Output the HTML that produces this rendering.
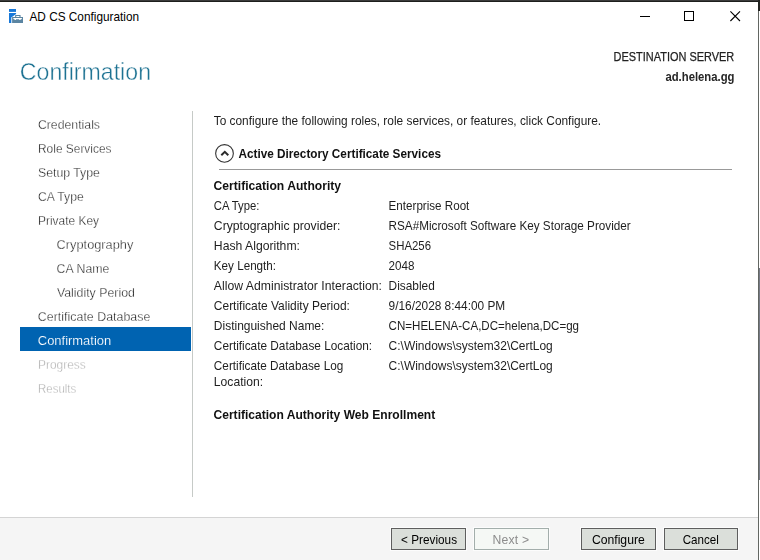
<!DOCTYPE html>
<html lang="en">
<head>
<meta charset="utf-8">
<title>AD CS Configuration</title>
<style>
html,body{margin:0;padding:0;}
body{width:760px;height:560px;overflow:hidden;background:#fff;font-family:"Liberation Sans", sans-serif;position:relative;}
.win{position:absolute;left:0;top:0;width:760px;height:560px;background:#fff;overflow:hidden;}
ul,dl,nav,main,section,header,footer{margin:0;padding:0;list-style:none;}
.t{position:absolute;display:block;margin:0;padding:0;white-space:nowrap;font-weight:400;line-height:20px;font-family:"Liberation Sans", sans-serif;transform-origin:0 50%;}
.gs{position:absolute;left:0;top:0;width:760px;height:560px;will-change:transform;}
.bar-top{position:absolute;left:0;top:0;width:760px;height:2px;background:#1d1f1c;}
.bar-top:before{content:"";position:absolute;left:0;top:0;width:760px;height:1px;background:#3b3b3b;}
.edge-r1{position:absolute;left:758px;top:0;width:2px;height:11px;background:#222421;}
.edge-r2{position:absolute;left:758px;top:11px;width:1px;height:549px;background:#626662;}
.edge-r3{position:absolute;left:759px;top:268px;width:1px;height:212px;background:#777b86;}
.ico{position:absolute;left:9px;top:9px;width:15px;height:15px;}
.ctl{position:absolute;top:2px;height:28px;}
.vline{position:absolute;left:192px;top:111px;width:1px;height:386px;background:#c6cac7;}
.selbg{position:absolute;left:20px;top:327px;width:171px;height:24px;background:#0063b1;}
.hr{position:absolute;left:219px;top:169px;width:513px;height:1px;background:#999;}
.exp{position:absolute;left:214px;top:143px;width:21px;height:21px;}
.footer{position:absolute;left:0;top:517px;width:758px;height:43px;background:#f5f5f5;border-top:1px solid #d4d4d4;box-sizing:border-box;}
.btn{position:absolute;top:528px;height:22px;margin:0;padding:0;box-sizing:border-box;border:1px solid #5e5e5e;border-radius:0;background:#dbdfda;box-shadow:0 0 0 1px #fcfcfc;font:inherit;text-align:left;overflow:visible;-webkit-appearance:none;appearance:none;}
.btn.off{border-color:#a3aeab;background:#f5f8f5;}
</style>
</head>
<body>
<div class="win">
  <div class="bar-top"></div>
  <div class="edge-r1"></div><div class="edge-r2"></div><div class="edge-r3"></div>
  <header class="titlebar">
    <svg class="ico" viewBox="0 0 15 15">
      <rect x="0" y="0" width="7" height="2.9" fill="#1878d8"/>
      <path d="M0 4.1h7.1v1L2.3 8.4V14H0z" fill="#1878d8"/>
      <path d="M6.7 8.2V6.5h4.3v1.7" fill="none" stroke="#5b85a2" stroke-width="1.1"/>
      <rect x="3.1" y="8" width="10.9" height="6" fill="#5b85a2"/>
      <path d="M4.1 9h9l-0.6 1.2h-0.7l-0.4 0.9h-1l-0.3-0.9H7.1l-0.3 0.9h-1l-0.4-0.9H4.7z" fill="#fff"/>
    </svg>
    <span class="t wt" style="left:29px;top:7px;font-size:12.2px;color:#000;transform:translateX(0.48px) scaleX(0.9687);">AD CS Configuration</span>
    <svg class="ctl" style="left:622px;width:138px" viewBox="0 0 138 28">
      <path d="M18 14.5h10" stroke="#000" stroke-width="1" fill="none" shape-rendering="crispEdges"/>
      <rect x="62.5" y="9.5" width="9" height="9" stroke="#000" stroke-width="1" fill="none" shape-rendering="crispEdges"/>
      <path d="M108.4 9.4l9.6 9.6M118 9.4l-9.6 9.6" stroke="#000" stroke-width="1.1" fill="none"/>
    </svg>
  </header>
  <div class="gs">
    <header class="pagehead">
      <h1 class="t h1" style="left:19px;top:54px;font-size:24.6px;color:#1d7292;line-height:36px;transform:translateX(0.82px) scaleX(0.9409);-webkit-text-stroke:0.42px #fff;">Confirmation</h1>
      <span class="t ds" style="left:613px;top:47px;font-size:12.7px;color:#222;transform:translateX(0.60px) scaleX(0.8629);-webkit-text-stroke:0.25px #222;">DESTINATION SERVER</span>
      <span class="t dn" style="left:665px;top:67px;font-size:12.2px;color:#262626;transform:translateX(0.42px) scaleX(0.9274);font-weight:700;">ad.helena.gg</span>
    </header>
    <nav>
      <div class="selbg"></div>
      <ul>
      <li class="t nv" style="left:37px;top:115px;font-size:13.2px;color:#000;transform:translateX(0.88px) scaleX(0.9313);-webkit-text-stroke:0.38px #fff;">Credentials</li>
      <li class="t nv" style="left:38px;top:139px;font-size:13.2px;color:#000;transform:translateX(0.02px) scaleX(0.9030);-webkit-text-stroke:0.38px #fff;">Role Services</li>
      <li class="t nv" style="left:37px;top:163px;font-size:13.2px;color:#000;transform:translateX(0.94px) scaleX(0.9316);-webkit-text-stroke:0.38px #fff;">Setup Type</li>
      <li class="t nv" style="left:37px;top:187px;font-size:13.2px;color:#000;transform:translateX(0.88px) scaleX(0.9236);-webkit-text-stroke:0.38px #fff;">CA Type</li>
      <li class="t nv" style="left:38px;top:211px;font-size:13.2px;color:#000;transform:translateX(0.02px) scaleX(0.9054);-webkit-text-stroke:0.38px #fff;">Private Key</li>
      <li class="t nv" style="left:56px;top:235px;font-size:13.2px;color:#000;transform:translateX(0.60px) scaleX(0.9692);-webkit-text-stroke:0.38px #fff;">Cryptography</li>
      <li class="t nv" style="left:56px;top:259px;font-size:13.2px;color:#000;transform:translateX(0.62px) scaleX(0.9355);-webkit-text-stroke:0.38px #fff;">CA Name</li>
      <li class="t nv" style="left:56px;top:283px;font-size:13.2px;color:#000;transform:translateX(0.95px) scaleX(0.9350);-webkit-text-stroke:0.38px #fff;">Validity Period</li>
      <li class="t nv" style="left:37px;top:307px;font-size:13.2px;color:#000;transform:translateX(0.87px) scaleX(0.9414);-webkit-text-stroke:0.38px #fff;">Certificate Database</li>
      <li class="t nv sel" style="left:37px;top:331px;font-size:13.2px;color:#fff;transform:translateX(0.84px) scaleX(0.9805);-webkit-text-stroke:0.15px #0063b1;">Confirmation</li>
      <li class="t nv dis" style="left:38px;top:355px;font-size:13.2px;color:#a6a6a6;transform:translateX(0.02px) scaleX(0.9041);-webkit-text-stroke:0.38px #fff;">Progress</li>
      <li class="t nv dis" style="left:38px;top:379px;font-size:13.2px;color:#a6a6a6;transform:translateX(0.06px) scaleX(0.8676);-webkit-text-stroke:0.38px #fff;">Results</li>
      </ul>
    </nav>
    <div class="vline"></div>
    <main>
      <p class="t p" style="left:213px;top:111px;font-size:12.2px;color:#1e1e1e;transform:translateX(0.73px) scaleX(0.9742);">To configure the following roles, role services, or features, click Configure.</p>
      <section>
      <svg class="exp" viewBox="0 0 21 21">
        <circle cx="10.5" cy="10.45" r="8.85" fill="#fff" stroke="#333" stroke-width="1.1"/>
        <path d="M7.3 12.3l3.5-3.5l3.5 3.5" fill="none" stroke="#2b2b2b" stroke-width="2"/>
      </svg>
      <h2 class="t sh" style="left:238px;top:144px;font-size:12.2px;color:#111;transform:translateX(0.46px) scaleX(0.9644);font-weight:700;">Active Directory Certificate Services</h2>
      <div class="hr"></div>
      <h3 class="t gh" style="left:213px;top:176px;font-size:12.2px;color:#111;transform:translateX(0.50px) scaleX(0.9955);font-weight:700;">Certification Authority</h3>
      <dl>
      <div class="row">
        <dt class="t k" style="left:213px;top:196px;font-size:12.2px;color:#1e1e1e;transform:translateX(0.85px) scaleX(0.9263);">CA Type:</dt>
        <dd class="t v" style="left:388px;top:196px;font-size:12.2px;color:#1e1e1e;transform:translateX(0.60px) scaleX(0.9535);">Enterprise Root</dd>
      </div>
      <div class="row">
        <dt class="t k" style="left:213px;top:216px;font-size:12.2px;color:#1e1e1e;transform:translateX(0.85px) scaleX(0.9987);">Cryptographic provider:</dt>
        <dd class="t v" style="left:388px;top:216px;font-size:12.2px;color:#1e1e1e;transform:translateX(0.60px) scaleX(0.9608);">RSA#Microsoft Software Key Storage Provider</dd>
      </div>
      <div class="row">
        <dt class="t k" style="left:213px;top:236px;font-size:12.2px;color:#1e1e1e;letter-spacing:0.005px;transform:translateX(0.85px);">Hash Algorithm:</dt>
        <dd class="t v" style="left:388px;top:236px;font-size:12.2px;color:#1e1e1e;transform:translateX(0.60px) scaleX(0.9341);">SHA256</dd>
      </div>
      <div class="row">
        <dt class="t k" style="left:213px;top:256px;font-size:12.2px;color:#1e1e1e;transform:translateX(0.85px) scaleX(0.9564);">Key Length:</dt>
        <dd class="t v" style="left:388px;top:256px;font-size:12.2px;color:#1e1e1e;transform:translateX(0.60px) scaleX(0.9555);">2048</dd>
      </div>
      <div class="row">
        <dt class="t k" style="left:213px;top:276px;font-size:12.2px;color:#1e1e1e;letter-spacing:0.025px;transform:translateX(0.85px);">Allow Administrator Interaction:</dt>
        <dd class="t v" style="left:388px;top:276px;font-size:12.2px;color:#1e1e1e;transform:translateX(0.60px) scaleX(0.9735);">Disabled</dd>
      </div>
      <div class="row">
        <dt class="t k" style="left:213px;top:296px;font-size:12.2px;color:#1e1e1e;transform:translateX(0.85px) scaleX(0.9810);">Certificate Validity Period:</dt>
        <dd class="t v" style="left:388px;top:296px;font-size:12.2px;color:#1e1e1e;transform:translateX(0.60px) scaleX(0.9724);">9/16/2028 8:44:00 PM</dd>
      </div>
      <div class="row">
        <dt class="t k" style="left:213px;top:316px;font-size:12.2px;color:#1e1e1e;transform:translateX(0.85px) scaleX(0.9826);">Distinguished Name:</dt>
        <dd class="t v" style="left:388px;top:316px;font-size:12.2px;color:#1e1e1e;transform:translateX(0.60px) scaleX(0.9480);">CN=HELENA-CA,DC=helena,DC=gg</dd>
      </div>
      <div class="row">
        <dt class="t k" style="left:213px;top:336px;font-size:12.2px;color:#1e1e1e;transform:translateX(0.85px) scaleX(0.9691);">Certificate Database Location:</dt>
        <dd class="t v" style="left:388px;top:336px;font-size:12.2px;color:#1e1e1e;transform:translateX(0.60px) scaleX(0.9813);">C:\Windows\system32\CertLog</dd>
      </div>
      <div class="row">
        <dt class="t k" style="left:213px;top:356px;font-size:12.2px;color:#1e1e1e;transform:translateX(0.85px) scaleX(0.9647);">Certificate Database Log</dt>
        <dt class="t k" style="left:213px;top:372px;font-size:12.2px;color:#1e1e1e;transform:translateX(0.85px) scaleX(0.9959);">Location:</dt>
        <dd class="t v" style="left:388px;top:356px;font-size:12.2px;color:#1e1e1e;transform:translateX(0.60px) scaleX(0.9813);">C:\Windows\system32\CertLog</dd>
      </div>
      </dl>
      <h3 class="t gh" style="left:213px;top:405px;font-size:12.2px;color:#111;transform:translateX(0.51px) scaleX(0.9892);font-weight:700;">Certification Authority Web Enrollment</h3>
      </section>
    </main>
    <footer class="footer"></footer>
    <button type="button" class="btn" style="left:391px;width:75px"><span class="t bl" style="left:9px;top:1px;font-size:12.2px;color:#000;transform:translateX(0.12px) scaleX(0.9652);">&lt; Previous</span></button>
    <button type="button" class="btn off" disabled style="left:474px;width:75px"><span class="t bl" style="left:17px;top:1px;font-size:12.2px;color:#8c8c8c;letter-spacing:0.187px;transform:translateX(0.50px);">Next &gt;</span></button>
    <button type="button" class="btn" style="left:581px;width:75px"><span class="t bl" style="left:9px;top:1px;font-size:12.2px;color:#000;letter-spacing:0.008px;transform:translateX(0.88px);">Configure</span></button>
    <button type="button" class="btn" style="left:664px;width:74px"><span class="t bl" style="left:17px;top:1px;font-size:12.2px;color:#000;transform:translateX(0.66px) scaleX(0.9520);">Cancel</span></button>
  </div>
</div>
</body>
</html>
